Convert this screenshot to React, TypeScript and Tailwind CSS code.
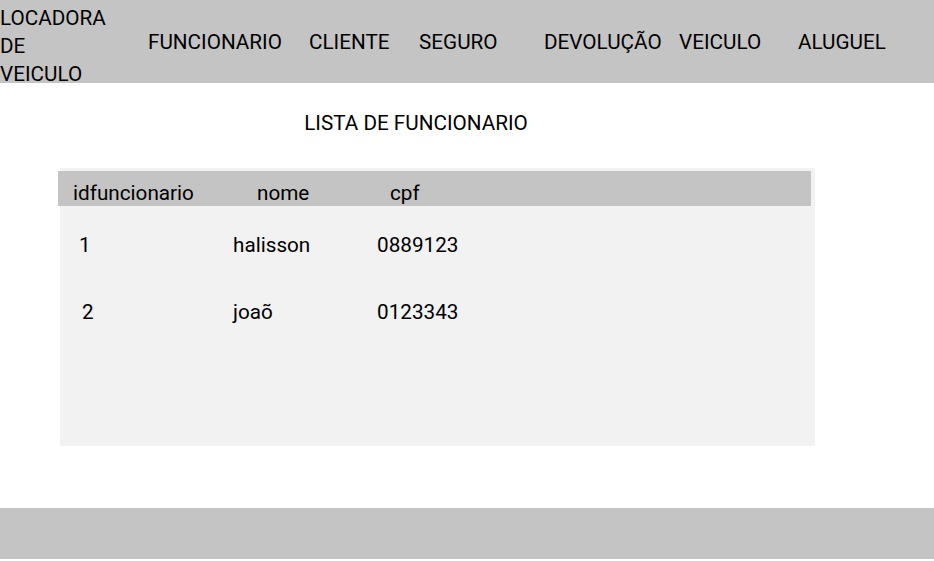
import React from "react";

const navItems: { label: string; w: string }[] = [
  { label: "FUNCIONARIO", w: "w-[161px]" },
  { label: "CLIENTE", w: "w-[110px]" },
  { label: "SEGURO", w: "w-[125px]" },
  { label: "DEVOLUÇÃO", w: "w-[135px]" },
  { label: "VEICULO", w: "w-[119px]" },
  { label: "ALUGUEL", w: "w-[100px]" },
];

const rows = [
  { id: "1", nome: "halisson", cpf: "0889123", pl: "pl-[19px]", w: "w-[154px]" },
  { id: "2", nome: "joaõ", cpf: "0123343", pl: "pl-[22px]", w: "w-[151px]" },
];

export default function App() {
  return (
    <div className="w-[934px] h-[561px] bg-white text-black font-['Roboto',sans-serif] text-[20.7px] overflow-hidden flex flex-col">
      <header className="h-[83px] shrink-0 bg-[#c4c4c4] flex items-start relative z-0">
        <div className="w-[148px] shrink-0 leading-[28px] pt-[4px] whitespace-nowrap">
          <div>LOCADORA</div>
          <div>DE</div>
          <div>VEICULO</div>
        </div>
        <nav className="flex items-center h-[83px]">
          {navItems.map((n) => (
            <div key={n.label} className={`${n.w} shrink-0 leading-[24px] whitespace-nowrap`}>
              {n.label}
            </div>
          ))}
        </nav>
      </header>

      <h1 className="mt-[28px] text-center leading-[24px] text-[20.7px] font-normal w-[832px]">
        LISTA DE FUNCIONARIO
      </h1>

      <section className="mt-[33px] ml-[60px] w-[755px] h-[278px] shrink-0 bg-[#f2f2f2] pt-[3px]">
        <div className="-ml-[2px] w-[753px] h-[35px] bg-[#c4c4c4] flex items-start pt-[10px] pl-[15px] leading-[24px]">
          <div className="w-[184px]">idfuncionario</div>
          <div className="w-[133px]">nome</div>
          <div>cpf</div>
        </div>
        <div className="flex flex-col gap-[43px] mt-[27px]">
          {rows.map((r) => (
            <div key={r.id} className={`flex leading-[24px] ${r.pl}`}>
              <div className={r.w}>{r.id}</div>
              <div className="w-[144px]">{r.nome}</div>
              <div>{r.cpf}</div>
            </div>
          ))}
        </div>
      </section>

      <footer className="mt-[62px] h-[51px] shrink-0 bg-[#c4c4c4]" />
    </div>
  );
}
